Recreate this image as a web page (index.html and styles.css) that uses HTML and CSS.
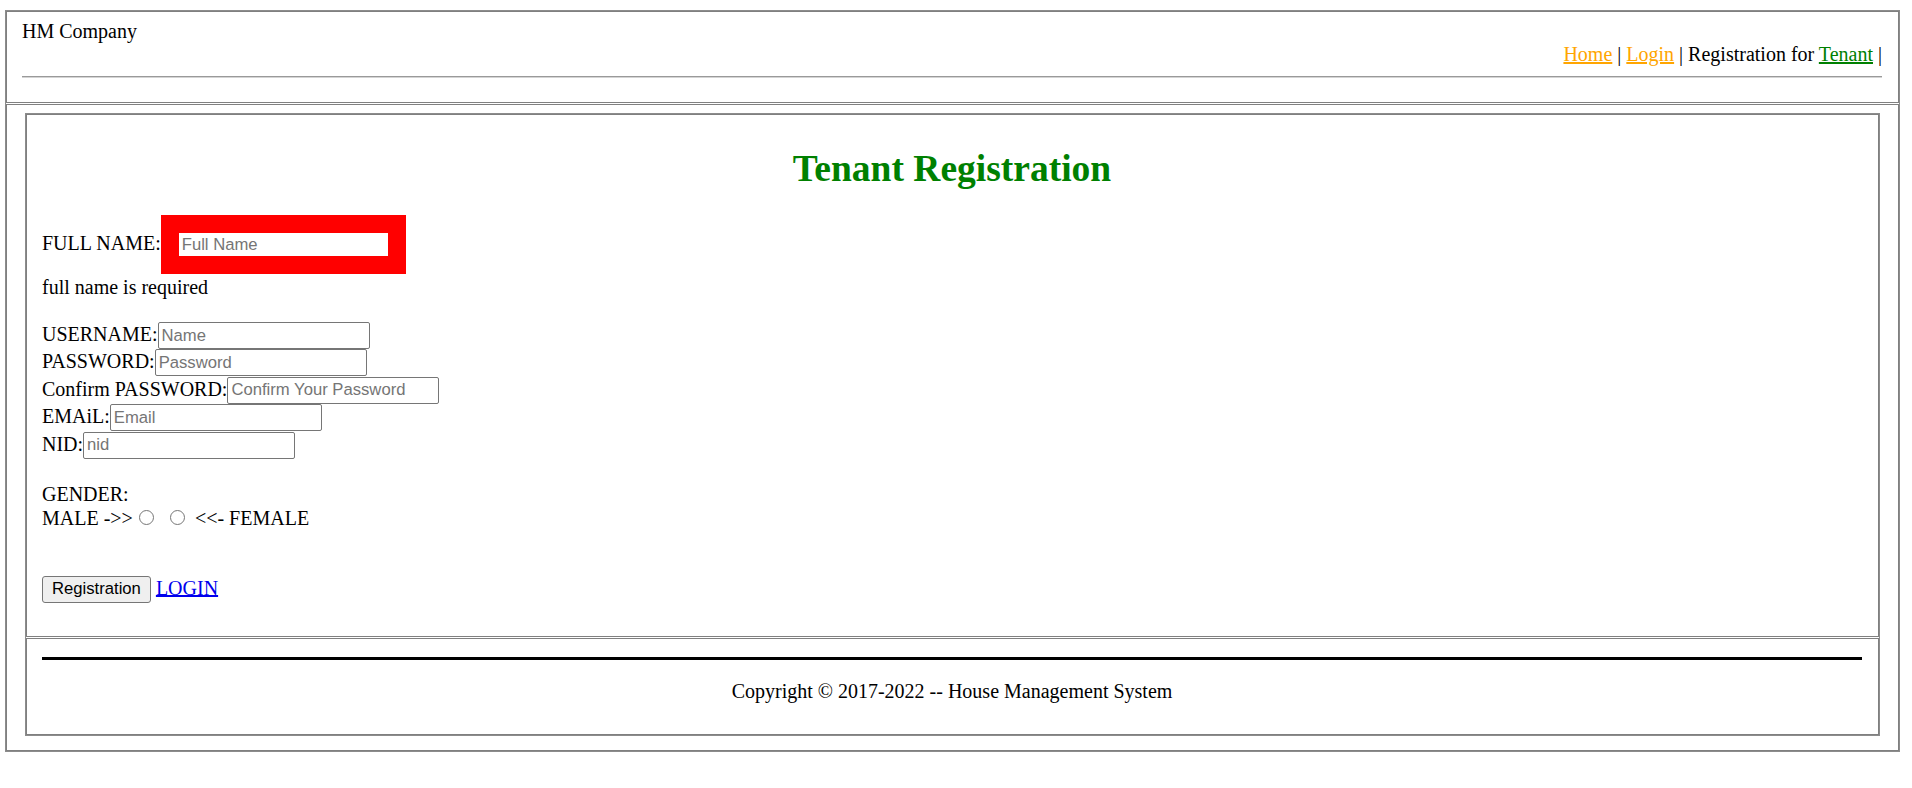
FILE: index.html
```html
<!DOCTYPE html>
<html>
<head>
<meta charset="utf-8">
<title>Tenant Registration</title>
<link rel="stylesheet" href="styles.css">
</head>
<body>
<div class="page">
  <header class="hdr">
    <div class="brand">HM Company</div>
    <nav class="nav"><a class="lnk-orange" href="#">Home</a> | <a class="lnk-orange" href="#">Login</a> | Registration for <a class="lnk-green" href="#">Tenant</a> |</nav>
    <hr class="hdr-rule">
  </header>
  <main class="main">
    <div class="card">
      <section class="form-cell">
        <h1 class="title">Tenant Registration</h1>
        <form class="reg-form" action="#">
          <div class="line">FULL NAME:<input class="inp inp-error" type="text" placeholder="Full Name"></div>
          <div class="line req">full name is required</div>
          <div class="fields">
            <div class="field">USERNAME:<input class="inp" type="text" placeholder="Name"></div>
            <div class="field">PASSWORD:<input class="inp" type="password" placeholder="Password"></div>
            <div class="field">Confirm PASSWORD:<input class="inp" type="password" placeholder="Confirm Your Password"></div>
            <div class="field">EMAiL:<input class="inp" type="email" placeholder="Email"></div>
            <div class="field">NID:<input class="inp" type="text" placeholder="nid"></div>
          </div>
          <div class="gender-label">GENDER:</div>
          <div class="line">MALE -&gt;&gt;<input class="radio" type="radio" name="g"> <input class="radio" type="radio" name="g"> &lt;&lt;- FEMALE</div>
          <div class="actions"><button class="btn" type="button">Registration</button> <a class="lnk-blue" href="#">LOGIN</a></div>
        </form>
      </section>
      <footer class="foot-cell">
        <hr class="foot-rule">
        <p class="copy">Copyright © 2017-2022 -- House Management System</p>
      </footer>
    </div>
  </main>
</div>
</body>
</html>
```

FILE: styles.css
```css
html, body {
  margin: 0;
  padding: 0;
  background: #fff;
}
body {
  font-family: "Liberation Serif", "Times New Roman", serif;
  font-size: 20px;
  line-height: 23px;
  color: #000;
}
.page {
  margin: 10px 0 0 5px;
  width: 1895px;
  box-sizing: border-box;
  border: 1px solid #8c8c8c;
}
.hdr {
  border: 1px solid #808080;
  padding: 8px 16px 14px 15px;
}
.brand {
  height: 23px;
}
.nav {
  text-align: right;
  height: 23px;
}
.lnk-orange { color: #ffa500; }
.lnk-green { color: #008000; }
.lnk-blue { color: #0000ee; }
.hdr-rule {
  margin: 10px 0 10px 0;
  height: 0;
  border: 0;
  border-top: 1px solid #9a9a9a;
  border-bottom: 1px solid #d4d4d4;
}
.main {
  margin-top: 1px;
  border: 1px solid #808080;
  padding: 8px 18px 14px 18px;
}
.card {
  border: 1px solid #8c8c8c;
}
.form-cell {
  border: 1px solid #808080;
  padding: 4px 16px 33px 15px;
}
.title {
  margin: 27px 0 23px 0;
  font-size: 37.5px;
  line-height: 46px;
  font-weight: bold;
  color: #008000;
  text-align: center;
}
.reg-form {
  margin: 0;
}
.line {
  line-height: 23px;
}
.req {
  margin-top: 2px;
}
.inp {
  font-family: "Liberation Sans", Arial, sans-serif;
  font-size: 16.6667px;
  width: 212px;
  height: 27px;
  box-sizing: border-box;
  border: 1px solid #767676;
  border-radius: 2px;
  padding: 0 3px;
  margin: 0;
  color: #000;
  background: #fff;
  vertical-align: baseline;
}
.inp::placeholder {
  color: #757575;
}
.inp-error {
  width: 245px;
  height: 59px;
  border: 18px solid #ff0000;
  border-radius: 0;
  padding: 0 3px;
}
.fields {
  margin-top: 23px;
}
.field {
  height: 27.4px;
}
.gender-label {
  margin-top: 24px;
}
.radio {
  -webkit-appearance: none;
  appearance: none;
  width: 15px;
  height: 15px;
  box-sizing: border-box;
  border: 1px solid #767676;
  border-radius: 50%;
  margin: 4px 4.5px 0 6.5px;
  padding: 0;
  background: #fff;
  vertical-align: baseline;
}
.actions {
  margin-top: 46px;
}
.btn {
  font-family: "Liberation Sans", Arial, sans-serif;
  font-size: 16.6667px;
  height: 27px;
  box-sizing: border-box;
  padding: 0 9px;
  margin: 0;
  border: 1px solid #767676;
  border-radius: 3px;
  background: #efefef;
  color: #000;
  vertical-align: baseline;
}
.foot-cell {
  margin-top: 1px;
  border: 1px solid #808080;
  padding: 18px 16px 31px 15px;
}
.foot-rule {
  margin: 0;
  border: 0;
  height: 3px;
  background: #000;
}
.copy {
  margin: 20px 0 0 0;
  text-align: center;
}
```
